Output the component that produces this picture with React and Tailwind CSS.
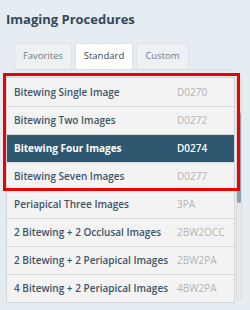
import React from "react";

const rows = [
  { name: "Bitewing Single Image", code: "D0270" },
  { name: "Bitewing Two Images", code: "D0272" },
  { name: "Bitewing Four Images", code: "D0274", active: true },
  { name: "Bitewing Seven Images", code: "D0277" },
  { name: "Periapical Three Images", code: "3PA" },
  { name: "2 Bitewing + 2 Occlusal Images", code: "2BW2OCC" },
  { name: "2 Bitewing + 2 Periapical Images", code: "2BW2PA" },
  { name: "4 Bitewing + 2 Periapical Images", code: "4BW2PA" },
];

const tabs = ["Favorites", "Standard", "Custom"];

export default function App() {
  return (
    <div
      className="relative w-[250px] h-[310px] bg-[#e5ecf2] overflow-hidden"
      style={{ fontFamily: '"Open Sans", "Noto Sans", sans-serif' }}
    >
      <h1 className="pl-[6px] pt-[8px] h-[43px] text-[13px] font-bold text-[#34475a] leading-[22px]">
        Imaging Procedures
      </h1>

      {/* tabs */}
      <div className="ml-[14px] mr-[17px] flex gap-[3px] border-b border-[#d6dde3]">
        {tabs.map(t => (
          <div
            key={t}
            className={
              t === "Standard"
                ? "h-[26px] w-[58px] flex items-center justify-center text-[9.5px] text-[#3c4650] bg-white border border-b-0 border-[#dde3e8]"
                : t === "Favorites"
                ? "h-[26px] w-[58px] flex items-center justify-center text-[9.5px] text-[#6f7a84] bg-[#edf1f4] border border-b-0 border-[#dde3e8]"
                : "h-[26px] w-[53px] flex items-center justify-center text-[9.5px] text-[#6f7a84] bg-[#edf1f4] border border-b-0 border-[#dde3e8]"
            }
          >
            {t}
          </div>
        ))}
      </div>

      {/* list + scrollbar */}
      <div className="mt-[7px] ml-[6px] flex">
        <div className="w-[229px] border border-[#d3d7db] bg-[#f3f3f3]">
          {rows.map((r, i) => (
            <div
              key={r.code}
              className={
                (r.active
                  ? "bg-[#2d5870] text-white font-bold "
                  : "text-[#3e5468] font-semibold ") +
                (i > 0 ? "border-t border-[#d6d9dc] " : "") +
                "h-[28px] flex items-center pl-[7px] text-[10px]"
              }
            >
              <span className="w-[163px] whitespace-nowrap">{r.name}</span>
              <span className={r.active ? "text-white font-semibold" : "text-[#b3b3b3] font-normal"}>{r.code}</span>
            </div>
          ))}
        </div>
        <div className="ml-[1px] w-[6px] h-[223px] rounded-full bg-[#e7e7e7] border border-[#dcdcdc] flex flex-col">
          <div className="mt-[34px] h-[91px] rounded-full bg-[#8ca2b0]" />
        </div>
      </div>

      {/* highlight annotation */}
      <div className="absolute left-[3px] top-[73px] w-[237px] h-[118px] border-[3px] border-[#ee0000] pointer-events-none" />
    </div>
  );
}
